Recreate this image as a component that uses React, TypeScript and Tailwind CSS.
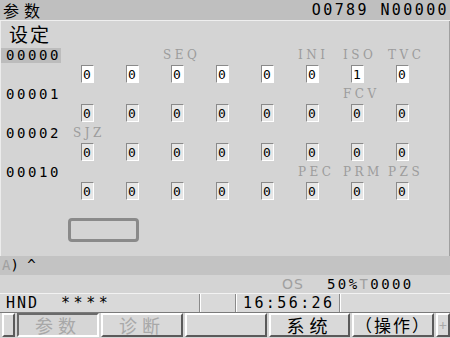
import React from "react";

const MONO = "font-['DejaVu_Sans_Mono','Liberation_Mono',monospace] slashed-zero";
const CJK = "font-['Noto_Sans_CJK_SC','Noto_Sans',sans-serif]";

interface Param {
  no: string;
  labels: Record<number, string>;
  values: number[];
  active?: boolean;
}

const params: Param[] = [
  { no: "00000", labels: { 2: "SEQ", 5: "INI", 6: "ISO", 7: "TVC" }, values: [0, 0, 0, 0, 0, 0, 1, 0], active: true },
  { no: "00001", labels: { 6: "FCV" }, values: [0, 0, 0, 0, 0, 0, 0, 0] },
  { no: "00002", labels: { 0: "SJZ" }, values: [0, 0, 0, 0, 0, 0, 0, 0] },
  { no: "00010", labels: { 5: "PEC", 6: "PRM", 7: "PZS" }, values: [0, 0, 0, 0, 0, 0, 0, 0] },
];

const softKeys = [
  { w: "w-[13px]", text: "", kind: "raised", track: "" },
  { w: "w-[82px]", text: "参数", kind: "pressed", track: "tracking-[5px] text-[18px]" },
  { w: "w-[82px]", text: "诊断", kind: "dim", track: "tracking-[5px] text-[18px]" },
  { w: "w-[82px]", text: "", kind: "raised", track: "" },
  { w: "w-[81px]", text: "系统", kind: "raised", track: "tracking-[5px] text-[18px]" },
  { w: "w-[82px]", text: "（操作）", kind: "raised", track: "tracking-[2px] text-[17px]" },
  { w: "w-[14px]", text: "+", kind: "dim", track: "text-[14px]" },
];

const ParamRow = ({ p }: { p: Param }) => (
  <>
    {/* label line */}
    <div className="h-[20px] flex items-center">
      <span
        className={`${MONO} h-[15px] w-[60px] pl-[5px] text-[14px] leading-[15px] tracking-[2.6px] text-black ${
          p.active ? "bg-[#bcbcbc]" : ""
        }`}
      >
        {p.no}
      </span>
    </div>
    {Array.from({ length: 8 }).map((_, i) => (
      <div key={i} className="h-[20px] flex items-center">
        <span className="font-['DejaVu_Serif','Liberation_Serif',serif] text-[12px] tracking-[3.5px] text-[#9c9c9c]">
          {p.labels[i] ?? ""}
        </span>
      </div>
    ))}
    {/* value line */}
    <div className="h-[19px]" />
    {p.values.map((v, i) => (
      <div key={i} className="h-[19px] pl-[8px]">
        <div
          className={`${MONO} h-[18px] w-[13px] border-t border-l border-[#8a8a8a] border-r-white border-b-white border-r border-b pl-[1px] text-[13px] leading-[17px] text-black ${
            p.active ? "bg-white" : "bg-[#e6e6e6]"
          }`}
        >
          {v}
        </div>
      </div>
    ))}
  </>
);

export default function App() {
  return (
    <div className="w-[450px] h-[338px] bg-[#d4d4d4] flex flex-col overflow-hidden select-none">
      {/* title bar */}
      <div className="h-[21px] shrink-0 bg-[#bfbfbf] border-b border-[#efefef] flex items-center justify-between pl-[3px] pr-[1px]">
        <div className={`${CJK} text-[16px] leading-none tracking-[5px] text-black`}>参数</div>
        <div className={`${MONO} text-[15px] leading-none tracking-[2.4px] text-black`}>O0789 N00000</div>
      </div>

      {/* main area */}
      <div className="h-[235px] shrink-0 border-l border-[#ececec] border-r border-r-[#a0a0a0] flex flex-col">
        <div className={`${CJK} h-[24px] pl-[8px] text-[19px] leading-[26px] tracking-[2px] text-black`}>设定</div>
        <div className="grid grid-cols-[72px_repeat(8,45px)]">
          {params.map((p) => (
            <ParamRow key={p.no} p={p} />
          ))}
        </div>
        <div className="ml-[67px] mt-[17px] h-[24px] w-[71px] rounded-[4px] border-[3px] border-[#8a8a8a]" />
      </div>

      {/* input line */}
      <div className={`${MONO} h-[19px] shrink-0 bg-[#c3c3c3] pl-[2px] text-[14px] leading-[19px] text-black`}>
        <span className="text-[#a0a0a0]">A</span>) ^
      </div>

      {/* mode line */}
      <div className="h-[18px] shrink-0 flex items-center pl-[282px]">
        <span className="font-['DejaVu_Sans',sans-serif] text-[14px] tracking-[1px] text-[#a0a0a0] w-[45px]">OS</span>
        <span className={`${MONO} text-[14px] tracking-[2.4px] text-black`}>
          50%<span className="text-[#a0a0a0]">T</span>0000
        </span>
      </div>

      {/* status bar */}
      <div className="h-[20px] shrink-0 flex border-t border-[#f2f2f2] border-b border-b-[#7a7a7a] bg-[#d9d9d9]">
        <div className={`${MONO} w-[200px] border-r border-[#8a8a8a] pl-[6px] text-[15px] leading-[18px] text-black`}>
          <span className="tracking-[2px]">HND</span>
          <span className="ml-[22px] tracking-[3.5px]">****</span>
        </div>
        <div className="w-[36px] border-l border-white border-r border-r-[#8a8a8a]" />
        <div className={`${MONO} w-[104px] border-l border-white border-r border-r-[#8a8a8a] pl-[6px] text-[15px] leading-[18px] tracking-[2.4px] text-black`}>
          16:56:26
        </div>
        <div className="flex-1 border-l border-white" />
      </div>

      {/* soft keys */}
      <div className="h-[25px] shrink-0 flex gap-[2px] pl-[2px] bg-[#d4d4d4]">
        {softKeys.map((k, i) => (
          <div
            key={i}
            className={`${k.w} h-[24px] flex items-center justify-center whitespace-nowrap ${CJK} leading-[20px] ${k.track} ${
              k.kind === "pressed"
                ? "border-2 border-t-[#6a6a6a] border-l-[#6a6a6a] border-b-white border-r-white bg-[#d6d6d6] text-[#a8a8a8]"
                : k.kind === "dim"
                ? "border-2 border-t-white border-l-white border-b-[#5a5a5a] border-r-[#5a5a5a] bg-[#d9d9d9] text-[#a8a8a8]"
                : "border-2 border-t-white border-l-white border-b-[#5a5a5a] border-r-[#5a5a5a] bg-[#d9d9d9] text-black"
            }`}
          >
            {k.text}
          </div>
        ))}
      </div>
    </div>
  );
}
